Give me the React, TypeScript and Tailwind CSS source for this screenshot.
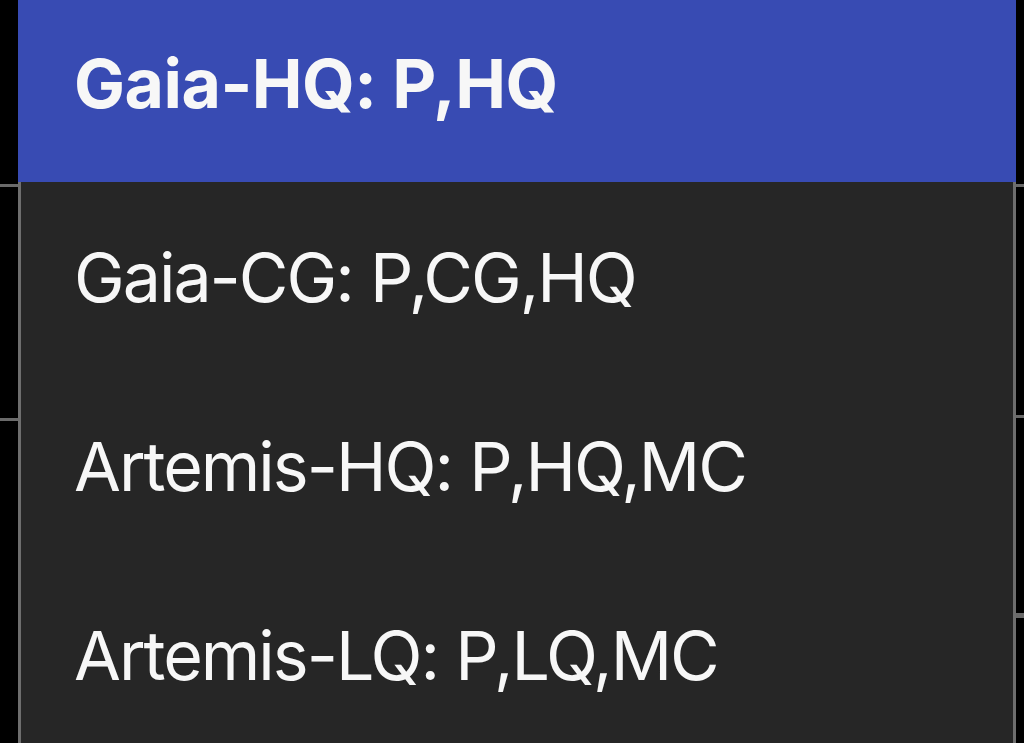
import React from "react";

const items = [
  { label: "Gaia-CG: P,CG,HQ" },
  { label: "Artemis-HQ: P,HQ,MC" },
  { label: "Artemis-LQ: P,LQ,MC" },
];

export default function App() {
  return (
    <div
      className="flex h-[743px] w-[1024px] overflow-hidden bg-black"
      style={{ fontFamily: "Inter, 'Noto Sans', sans-serif" }}
    >
      {/* left strip: grid lines of the table behind */}
      <div className="flex w-[18px] shrink-0 flex-col">
        <div className="h-[184px] shrink-0" />
        <div className="h-[3px] shrink-0 bg-[#6a6a6a]" />
        <div className="h-[231px] shrink-0" />
        <div className="h-[3px] shrink-0 bg-[#6a6a6a]" />
      </div>

      {/* menu */}
      <div className="flex w-[998px] shrink-0 flex-col border-x-[3px] border-[#6e6e6e] bg-[#262626] text-[#f7f7f7]">
        <div className="-mx-[3px] flex h-[182px] shrink-0 items-center bg-[#384bb3] pb-4 pl-[56px] text-[68px] font-bold leading-none tracking-[-0.5px]">
          Gaia-HQ: P,HQ
        </div>
        {items.map((it) => (
          <div
            key={it.label}
            className="flex h-[189px] shrink-0 items-center pl-[53px] text-[68px] font-normal leading-none tracking-[-2px]"
          >
            {it.label}
          </div>
        ))}
      </div>

      {/* right strip */}
      <div className="flex w-[8px] shrink-0 flex-col">
        <div className="h-[184px] shrink-0" />
        <div className="h-[3px] shrink-0 bg-[#6a6a6a]" />
        <div className="h-[228px] shrink-0" />
        <div className="h-[3px] shrink-0 bg-[#6a6a6a]" />
        <div className="h-[195px] shrink-0" />
        <div className="h-[5px] shrink-0 bg-[#6a6a6a]" />
      </div>
    </div>
  );
}
